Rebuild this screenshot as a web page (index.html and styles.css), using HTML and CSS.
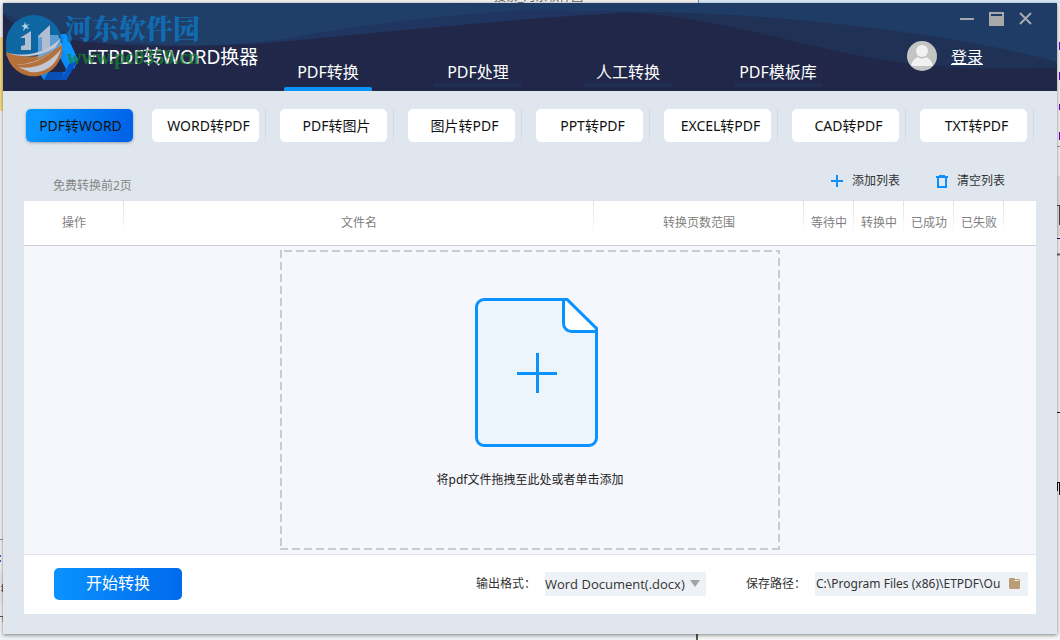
FILE: index.html
```html
<!DOCTYPE html>
<html lang="zh-CN">
<head>
<meta charset="utf-8">
<title>ETPDF转WORD换器</title>
<link rel="stylesheet" href="styles.css">
</head>
<body>
<div class="behind" aria-hidden="true">
  <span class="behind-top"></span>
  <span class="behind-sky"></span>
  <span class="behind-text">搜索_河东软件园</span>
  <span class="behind-folder"></span>
  <svg class="behind-left" width="4" height="110" viewBox="0 0 4 110"><path d="M0 9.500h3" stroke="#999"/><path d="M0 26h1M0 31h1" stroke="#36c" stroke-width="2"/><rect y="43" width="3" height="30" fill="#eceef1"/><path d="M2.500 54v8M1.500 56v1M1.500 60v1" stroke="#865"/><path d="M0 86.500h3" stroke="#555"/><path d="M3 86v6" stroke="#865"/></svg>
  <svg class="behind-right" width="3" height="500" viewBox="0 0 3 500"><path d="M2.500 12v8M2.500 42v8M2.500 74v6M2.500 102v8" stroke="#60e"/><path d="M0 116.500h3" stroke="#999"/><rect y="146" width="3" height="60" fill="#e6e6e6"/><path d="M0 175.500h3M2.500 175v20" stroke="#444"/><path d="M0 208.500h3" stroke="#117"/><path d="M0 224.500h3" stroke="#666" stroke-width="2"/><path d="M0 382.500h3M0 452.500h3M2.500 452v13M.5 452v9" stroke="#111"/></svg>
  <span class="behind-bottom"></span>
</div>
<main class="window">
  <header class="header">
    <svg class="waves" viewBox="0 0 1054 88" preserveAspectRatio="none" aria-hidden="true">
      <rect width="1054" height="88" fill="#202748"/>
      <path d="M0 0H660V9C600 9 500 18 400 27C340 33 290 38 250 41C150 46 20 44 0 10Z" fill="#20355f"/>
      <path d="M0 0H660C520 5 400 14 290 34C220 47 90 48 0 10Z" fill="#1f3e68"/>
      <path d="M600 9C700 8 790 43 880 57C950 67 1000 66 1054 65V0H600Z" fill="#203156"/>
      <path d="M440 0C500 6 570 9 650 9C780 11 950 30 1054 59V0Z" fill="#1f3c67"/>
    </svg>
    <div class="brand">
      <svg class="logo" width="80" height="80" viewBox="0 0 80 80" aria-hidden="true">
        <path d="M37 27h24l12 26-12 20H39l-6-9Z" fill="#0c8bf5"/>
        <path d="M61 27l12 26-4 9-13-22Z" fill="#0a96ff"/>
        <path d="M39 73l7-13h14l-3 13Z" fill="#0850b4"/>
        <path d="M45 63l7-18 9 17-1 3H45Z" fill="#202748"/>
        <path d="M56 73l8-16 9-4-12 20Z" fill="#0654ca"/>
        <path d="M1 36a28 28 0 0 1 56 0c-17 13-36 17-56 13Z" fill="#0e67a3"/>
        <path d="M1 45c24 9 42 4 56-8a28 28 0 0 1-56 8Z" fill="#b5713c"/>
        <path d="M33 28h20l4 10-24 14Z" fill="#7bb5e8" opacity=".7"/>
        <path d="M15 31l11-7v19H16v-4l4-1v-7Zm20-4l10-9v25h-8V30l-4 1Z" fill="#b1bdd0"/>
        <path d="M4 46c22 5 40-3 52-15-8 18-26 27-45 27 23-2 34-11 38-17C37 49 18 52 4 46Zm9 14c18 3 33-5 43-18-4 15-15 25-31 23Z" fill="#c3c6d3"/>
        <path d="M20 15l1 3 4-1-3 2 2 3-3-1-3 3 1-4-3-1 3-1Z" fill="#b1cee3"/>
      </svg>
      <h1 class="title">ETPDF转WORD换器</h1>
      <div class="watermark"><span class="mark-name">河东软件园</span><span class="mark-url">www.pc0359.cn</span></div>
    </div>
    <nav class="nav">
      <a class="nav-item active" href="#convert">PDF转换</a>
      <a class="nav-item" href="#process">PDF处理</a>
      <a class="nav-item" href="#manual">人工转换</a>
      <a class="nav-item" href="#templates">PDF模板库</a>
    </nav>
    <div class="side">
      <div class="controls">
        <button class="control" aria-label="最小化"><svg width="14" height="14" viewBox="0 0 14 14"><path d="M0 7h14" stroke="#a5a7ac" stroke-width="2"/></svg></button>
        <button class="control" aria-label="最大化"><svg width="15" height="14" viewBox="0 0 15 14"><path fill="#a7a8aa" fill-rule="evenodd" d="M0 0h15v14H0ZM2 2v2h11V2Z"/></svg></button>
        <button class="control" aria-label="关闭"><svg width="14" height="13" viewBox="0 0 14 13"><path d="M1 1l11 11M12 1L1 12" stroke="#a9abae" stroke-width="2"/></svg></button>
      </div>
      <div class="user">
        <svg width="30" height="30" viewBox="0 0 30 30" aria-hidden="true"><circle cx="15" cy="15" r="15" fill="#c4c4c4"/><circle cx="15" cy="10" r="6" fill="#f1f1f1"/><path d="M4 25c1-5 4-8 7-9 2 2 6 2 8 0 3 1 6 4 7 9Z" fill="#f1f1f1"/></svg>
        <a class="login" href="#login">登录</a>
      </div>
    </div>
  </header>
  <div class="tabs">
    <div class="tab-cell"><button class="tab selected">PDF转WORD</button></div>
    <div class="tab-cell"><button class="tab">WORD转PDF</button></div>
    <div class="tab-cell"><button class="tab">PDF转图片</button></div>
    <div class="tab-cell"><button class="tab">图片转PDF</button></div>
    <div class="tab-cell"><button class="tab">PPT转PDF</button></div>
    <div class="tab-cell"><button class="tab">EXCEL转PDF</button></div>
    <div class="tab-cell"><button class="tab">CAD转PDF</button></div>
    <div class="tab-cell"><button class="tab">TXT转PDF</button></div>
  </div>
  <div class="toolbar">
    <p class="note">免费转换前2页</p>
    <div class="actions">
      <button class="action"><svg width="12" height="12" viewBox="0 0 12 12"><path d="M0 6h12M6 0v12" stroke="#0a90ff" stroke-width="2"/></svg>添加列表</button>
      <button class="action"><svg width="12" height="13" viewBox="0 0 12 13"><path d="M0 2h12M3 1h6M2 2v10h8V2" fill="none" stroke="#0a90ff" stroke-width="2"/></svg>清空列表</button>
    </div>
  </div>
  <section class="panel">
    <table class="files">
      <thead><tr><th class="col-action">操作</th><th>文件名</th><th class="col-range">转换页数范围</th><th class="col-state">等待中</th><th class="col-state">转换中</th><th class="col-state">已成功</th><th class="col-state">已失败</th><td class="col-end"></td></tr></thead>
    </table>
    <div class="stage">
      <button class="drop">
        <svg width="123" height="149" viewBox="0 0 123 149" aria-hidden="true">
          <path d="M9 1.500h83L121.500 31v109a7.500 7.500 0 0 1-7.500 7.500H9A7.500 7.500 0 0 1 1.500 140V9A7.500 7.500 0 0 1 9 1.500Z" fill="#ecf4fc" stroke="#0a93ff" stroke-width="3"/>
          <path d="M88.500 1.500H92l29.500 29v3H96.500a8 8 0 0 1-8-8Z" fill="#fff" stroke="#0a93ff" stroke-width="3"/>
          <path d="M42 75.500h40M62.500 55v40" stroke="#0a93ff" stroke-width="3"/>
        </svg>
        <span>将pdf文件拖拽至此处或者单击添加</span>
      </button>
    </div>
    <footer class="footer">
      <button class="start">开始转换</button>
      <div class="fields">
        <label for="format">输出格式：</label>
        <div class="select-box">
          <select id="format"><option>Word Document(.docx)</option></select>
          <svg class="arrow" width="10" height="7" viewBox="0 0 10 7" aria-hidden="true"><path d="M0 0h10L5 7Z" fill="#a3a3a3"/></svg>
        </div>
        <label for="path">保存路径：</label>
        <div class="path-box">
          <input id="path" type="text" value="C:\Program Files (x86)\ETPDF\Ou">
          <button class="browse" aria-label="浏览"><svg width="11" height="11" viewBox="0 0 11 11"><path d="M0 1l1-1h4l1 1h4l1 1v8l-1 1H1l-1-1Z" fill="#b89d75"/><path d="M5 2h5v1H6Z" fill="#f2ece2"/></svg></button>
        </div>
      </div>
    </footer>
  </section>
</main>
</body>
</html>
```
FILE: styles.css
```css
* { box-sizing: border-box; }
body {
  margin: 0;
  min-height: 100vh;
  padding: 3px 3px 6px;
  display: flex;
  position: relative;
  overflow: hidden;
  background: #f8f8f8;
  font: 12px/18px "Noto Sans", "Noto Sans CJK SC", sans-serif;
  color: #333;
}
button, input, select { font: inherit; color: inherit; border: 0; padding: 0; margin: 0; background: none; }
svg { display: block; flex: none; }
a { color: inherit; text-decoration: none; }

.behind { position: absolute; inset: 0; overflow: hidden; }
.behind span, .behind svg { position: absolute; }
.behind-top { left: 0; top: 0; width: 100%; height: 3px; background: #f3f3f3; }
.behind-sky { left: 698px; right: 0; top: 0; height: 3px; background: #d8ebf7; border-left: 1px solid #888; }
.behind-text { left: 494px; top: -11px; font-size: 12px; line-height: 16px; color: #666; }
.behind-folder { left: 0; top: 37px; width: 4px; height: 74px; background: #fadd83; }
.behind-left { left: 0; top: 530px; }
.behind-right { right: 0; top: 30px; }
.behind-bottom { left: 0; bottom: 0; width: 698px; height: 6px; background: #edf2f7; border-right: 2px solid #555; }

.window {
  position: relative;
  flex: 1;
  min-width: 0;
  display: flex;
  flex-direction: column;
  background: #dfe6ed;
  box-shadow: 0 1px 4px rgba(0, 0, 0, .5);
}
.header {
  position: relative;
  height: 88px;
  display: grid;
  grid-template-columns: 250px 600px 1fr;
  color: #fff;
}
.waves { position: absolute; width: 100%; height: 100%; }
.brand { position: relative; }
.logo { position: absolute; left: 2px; top: 4px; }
.title { position: absolute; left: 84px; top: 41px; margin: 0; font-weight: 400; font-size: 19px; line-height: 26px; white-space: nowrap; }
.watermark { position: absolute; left: 62px; top: 9px; display: flex; flex-direction: column; white-space: nowrap; }
.mark-name { font: 900 27px/32px "Noto Serif CJK SC", "Noto Sans CJK SC", serif; color: #126bb0; }
.mark-url { font: 700 20px/26px "Liberation Serif", serif; color: #168330; opacity: .75; padding-left: 2px; }
.nav { position: relative; display: grid; grid-template-columns: repeat(4, 1fr); }
.nav-item { display: flex; flex-direction: column; align-items: center; justify-content: flex-end; font-size: 16px; line-height: 24px; padding-bottom: 4px; }
.nav-item::after { content: ""; width: 88px; height: 4px; margin-top: -1px; border-radius: 2px; background: #202e53; }
.nav-item.active { padding-bottom: 0; }
.nav-item.active::after { background: #0a93ff; margin-top: 3px; border-radius: 2px 2px 0 0; }
.side { position: relative; display: flex; flex-direction: column; gap: 15px; padding-top: 8px; }
.controls { display: flex; justify-content: flex-end; align-items: center; gap: 15px; height: 15px; padding-right: 24px; }
.user { display: flex; justify-content: flex-end; align-items: center; gap: 14px; padding-right: 74px; }
.login { font-size: 16px; line-height: 24px; padding-top: 2px; text-decoration: underline; }

.tabs { display: grid; grid-template-columns: repeat(8, 1fr); padding: 18px 23px 0 7px; }
.tab-cell { display: flex; padding: 0 6px 0 14px; border-right: 1px solid #d3dbe4; }
.tab-cell:first-child { padding-left: 16px; padding-right: 4px; border-color: transparent; }
.tab { flex: 1; min-width: 0; height: 33px; padding-left: 6px; border-radius: 5px; background: #fff; color: #111; font: 400 14px/20px "Noto Sans", "Noto Sans CJK SC", sans-serif; white-space: nowrap; }
.selected { padding-left: 2px; background: linear-gradient(115deg, #0a95ff 15%, #0063e8 90%); box-shadow: 0 1px 3px rgba(40, 60, 90, .4); }

.toolbar { height: 59px; display: flex; justify-content: space-between; padding: 30px 52px 0 50px; }
.note { margin: 0; padding-top: 5px; color: #858585; }
.actions { display: flex; gap: 36px; align-items: flex-start; }
.action { display: flex; align-items: center; gap: 9px; }

.panel { flex: 1; display: flex; flex-direction: column; margin: 0 21px 20px; background: #fff; }
.files { width: 100%; table-layout: fixed; border-collapse: collapse; color: #808080; border-bottom: 1px solid #ccd0d4; }
.files th, .files td { height: 44px; padding: 0; font-weight: 400; background: linear-gradient(#dfe1e4, #fff 80%) right top / 1px 100% no-repeat; }
.files .col-end { width: 32px; background: none; }
.col-action { width: 100px; }
.col-range { width: 210px; }
.col-state { width: 50px; }
.stage { flex: 1; display: flex; justify-content: center; padding: 4px; background: #f5f7fc; border-bottom: 1px solid #e0e5eb; }
.drop {
  width: 500px;
  min-height: 300px;
  display: flex;
  flex-direction: column;
  align-items: center;
  justify-content: flex-start;
  gap: 24px;
  padding: 48px 0 0 13px;
  color: #222;
  background:
    repeating-linear-gradient(90deg, transparent 0 4px, #ccc 4px 12px) left top / 100% 2px no-repeat,
    repeating-linear-gradient(90deg, #ccc 0 8px, transparent 8px 12px) left bottom / 100% 2px no-repeat,
    repeating-linear-gradient(#ccc 0 8px, transparent 8px 12px) left top / 2px 100% no-repeat,
    repeating-linear-gradient(#ccc 0 4px, transparent 4px 8px, #ccc 8px 12px) right top / 2px 100% no-repeat;
}
.drop span { margin-right: 13px; }
.footer { display: flex; align-items: center; justify-content: space-between; min-height: 59px; padding: 0 8px 2px 30px; }
.start { width: 128px; height: 32px; border-radius: 5px; background: linear-gradient(90deg, #0a93ff, #006aec); color: #fff; font-size: 16px; line-height: 24px; padding-bottom: 2px; }
.fields { display: flex; align-items: center; }
.fields label { margin-right: 9px; white-space: nowrap; }
.select-box { position: relative; width: 161px; margin-right: 40px; }
.select-box select { display: block; width: 100%; height: 24px; appearance: none; background: #eef2f6; font: 13px/18px "Open Sans", "Noto Sans CJK SC", sans-serif; }
.arrow { position: absolute; right: 6px; top: 8px; pointer-events: none; }
.path-box { display: flex; align-items: center; width: 213px; height: 24px; padding: 0 8px 0 1px; gap: 5px; background: #eef2f6; }
.path-box input { flex: 1; min-width: 0; height: 24px; font: 12px/18px "Noto Sans", "Noto Sans CJK SC", sans-serif; }
```
